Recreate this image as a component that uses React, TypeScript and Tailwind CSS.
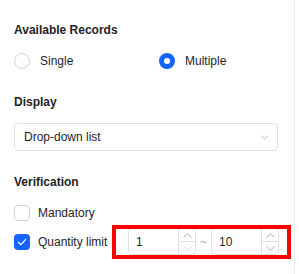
import React from 'react';

const font = { fontFamily: '"Liberation Sans", Arial, sans-serif' };

function Chevron({ dir, color }: { dir: 'up' | 'down'; color: string }) {
  return (
    <svg width="9" height="5" viewBox="0 0 9 5" fill="none">
      <path
        d={dir === 'up' ? 'M0.5 4.5L4.5 0.8L8.5 4.5' : 'M0.5 0.5L4.5 4.2L8.5 0.5'}
        stroke={color}
        strokeWidth="1"
      />
    </svg>
  );
}

function Radio({ checked, label }: { checked?: boolean; label: string }) {
  return (
    <div className="flex items-center">
      {checked ? (
        <span className="w-4 h-4 rounded-full border-[5px] border-[#1664ff] bg-white" />
      ) : (
        <span className="w-4 h-4 rounded-full border border-[#d0d3d6] bg-white" />
      )}
      <span className="ml-[10px] text-[12px] leading-5 text-[#1f2329]">{label}</span>
    </div>
  );
}

function Checkbox({ checked }: { checked?: boolean }) {
  if (checked) {
    return (
      <span className="w-4 h-4 rounded-[4px] bg-[#1664ff] flex items-center justify-center">
        <svg width="10" height="8" viewBox="0 0 10 8" fill="none">
          <path d="M1 4L3.8 6.6L9 1.2" stroke="white" strokeWidth="1.2" />
        </svg>
      </span>
    );
  }
  return <span className="w-4 h-4 rounded-[4px] border border-[#d0d3d6] bg-white" />;
}

function NumberInput({ value, downDisabled }: { value: string; downDisabled?: boolean }) {
  return (
    <div className="w-[68px] h-[27px] border border-[#dee0e3] rounded-[4px] flex bg-white">
      <div className="flex-1 pl-[7px] flex items-center text-[12px] text-[#1f2329]">{value}</div>
      <div className="w-[17px] border-l border-[#dee0e3] flex flex-col">
        <div className="flex-1 border-b border-[#dee0e3] flex items-center justify-center">
          <Chevron dir="up" color="#a6abb2" />
        </div>
        <div className="flex-1 flex items-center justify-center">
          <Chevron dir="down" color={downDisabled ? '#d5d8dc' : '#a6abb2'} />
        </div>
      </div>
    </div>
  );
}

export default function App() {
  return (
    <div className="w-[299px] h-[274px] bg-white flex" style={font}>
      <div className="w-[295px] h-full border-r border-[#eceef0] pl-[14px] pt-[20px] flex flex-col">
        <div className="h-5 text-[12px] leading-5 font-bold text-[#1f2329]">Available Records</div>
        <div className="mt-[11px] h-5 flex">
          <div className="w-[145px]">
            <Radio label="Single" />
          </div>
          <Radio checked label="Multiple" />
        </div>

        <div className="mt-[21px] h-5 text-[12px] leading-5 font-bold text-[#1f2329]">Display</div>
        <div className="mt-[11px] w-[264px] h-[28px] border border-[#dee0e3] rounded-[4px] flex items-center justify-between pl-[9px] pr-[8px]">
          <span className="text-[12px] text-[#1f2329]">Drop-down list</span>
          <svg width="9" height="5" viewBox="0 0 9 5" fill="none">
            <path d="M1 0.6L4.5 4L8 0.6" stroke="#b4b8bd" strokeWidth="1" />
          </svg>
        </div>

        <div className="mt-[21px] h-5 text-[12px] leading-5 font-bold text-[#1f2329]">Verification</div>
        <div className="mt-[11px] h-5 flex items-center">
          <Checkbox />
          <span className="ml-2 text-[12px] leading-5 text-[#1f2329]">Mandatory</span>
        </div>
        <div className="mt-[5px] h-[27px] flex items-center relative">
          <Checkbox checked />
          <span className="ml-2 w-[90px] text-[12px] leading-5 text-[#1f2329]">Quantity limit</span>
          <NumberInput value="1" downDisabled />
          <span className="w-[15px] text-center text-[12px] text-[#a6abb2]">~</span>
          <NumberInput value="10" />
          <div className="absolute left-[98px] top-[-3px] w-[179px] h-[34px] border-4 border-[#ff0000]" />
        </div>
      </div>
    </div>
  );
}
